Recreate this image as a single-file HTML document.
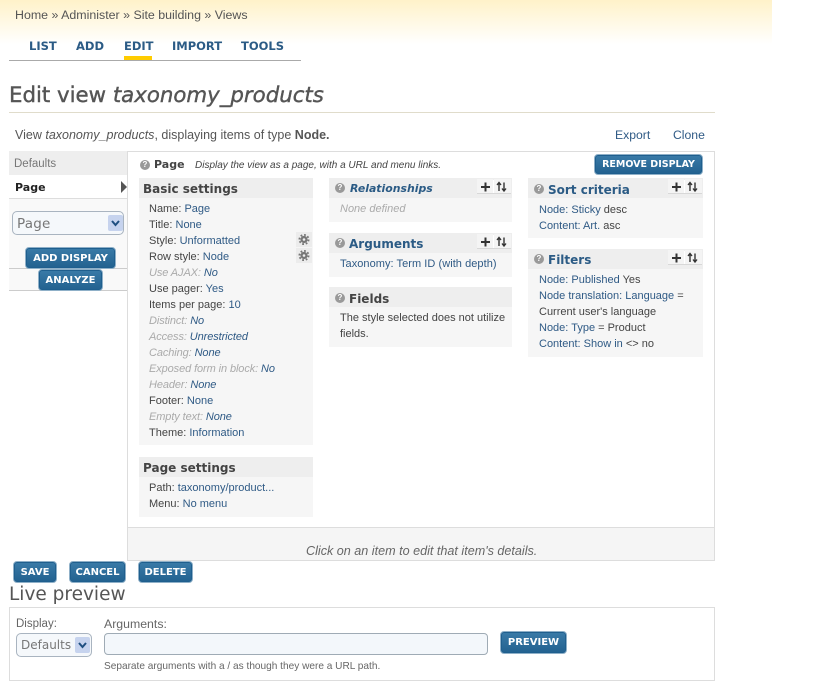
<!DOCTYPE html>
<html><head><meta charset="utf-8"><style>
html,body{margin:0;padding:0;background:#fff;width:840px;height:690px;overflow:hidden}
body{font-family:"Liberation Sans",sans-serif;font-size:11px;color:#444;position:relative}
.a{position:absolute}
.t{position:absolute;white-space:nowrap;line-height:16px;height:16px}
.r{margin-top:1px}
i{font-style:italic}
.l{color:#2f5a85}
.d{color:#aaa;font-style:italic;letter-spacing:-.1px}
.d span{color:#2f5a85}
.h{position:absolute;background:#eee;height:20px}
.p{position:absolute;background:#f6f6f6}
.ht{position:absolute;white-space:nowrap;font-family:"DejaVu Sans",sans-serif;font-weight:bold;font-size:12px;line-height:16px;color:#444}
.tab{position:absolute;white-space:nowrap;top:38px;font:bold 11.5px/16px "DejaVu Sans",sans-serif;color:#2b5b85}
.b{position:absolute;box-sizing:border-box;border:1px solid #8fb0c8;border-radius:4px;background:linear-gradient(#3a7ba8,#22618f);box-shadow:inset 0 0 0 1px #1f5f8e;color:#fff;font-family:"DejaVu Sans",sans-serif;font-weight:bold;font-size:10px;text-align:center;white-space:nowrap}
.q{position:absolute;width:10px;height:10px;border-radius:50%;background:#999;color:#fff;font:bold 8px/10px "Liberation Sans",sans-serif;text-align:center}
.ic{position:absolute;width:35px;height:15px}
.g{position:absolute;width:16px;height:15px}
.sel{position:absolute;box-sizing:border-box;border:1px solid #a9b4c0;border-radius:5px;background:#f5f8fb;color:#777;font-family:"DejaVu Sans",sans-serif;white-space:nowrap}
.ar{position:absolute;width:15px;height:16px;background:#c6d3ee;border-radius:2px}
</style></head><body>
<svg width="0" height="0" style="position:absolute"><defs>
<g id="pm">
<rect x="0" y="0" width="16" height="15" fill="#f4f4f4"/><rect x="17" y="0" width="17" height="15" fill="#f4f4f4"/>
<rect x="0" y="14" width="34" height="1" fill="#d8d8d8"/><rect x="16" y="1" width="1" height="13" fill="#fff"/>
<path d="M4 8h9M8.500 3.500v9" stroke="#333" stroke-width="2" fill="none"/>
<path d="M22 12V4M20 6l2-2.500 2 2.500M27 3.500v8M25 9.500l2 2.500 2-2.500" stroke="#333" stroke-width="1.400" fill="none"/>
</g>
<g id="gear">
<rect width="16" height="15" fill="#ececec"/>
<circle cx="8" cy="7.500" r="3.600" fill="#777"/>
<circle cx="8" cy="7.500" r="4.600" fill="none" stroke="#777" stroke-width="1.800" stroke-dasharray="1.800 1.800"/>
<circle cx="8" cy="7.500" r="1.300" fill="#eee"/>
</g>
</defs></svg>
<div class="a" style="left:0;top:0;width:772px;height:44px;background:linear-gradient(#fff2c9,#fff)"></div>
<div class="t" style="left:15px;top:7px;color:#555;font-size:12.4px">Home » Administer » Site building » Views</div>

<div class="tab" style="left:29px">LIST</div>
<div class="tab" style="left:76px">ADD</div>
<div class="tab" style="left:124px">EDIT</div>
<div class="tab" style="left:172px">IMPORT</div>
<div class="tab" style="left:241px">TOOLS</div>
<div class="a" style="left:124px;top:56px;width:28px;height:4px;background:#fc0"></div>
<div class="a" style="left:9px;top:60px;width:292px;height:1px;background:#aaa"></div>

<div class="t" style="left:9px;top:82px;height:28px;font:21.300px/28px 'DejaVu Sans',sans-serif;color:#555;-webkit-text-stroke:.4px #555">Edit view <i>taxonomy_products</i></div>
<div class="a" style="left:9px;top:112px;width:706px;height:1px;background:#e0dccb"></div>

<div class="t" style="left:15px;top:127px;color:#555;font-size:12.500px">View <i>taxonomy_products</i>, displaying items of type <b>Node.</b></div>
<div class="t l" style="left:615px;top:127px;font-size:12.200px">Export</div>
<div class="t l" style="left:673px;top:127px;font-size:12.200px">Clone</div>

<!-- left column -->
<div class="a" style="left:9px;top:151px;width:119px;height:24px;background:#eee"></div>
<div class="t" style="left:14px;top:156px;color:#777;font-size:11.500px">Defaults</div>
<div class="a" style="left:9px;top:198px;width:119px;height:92px;background:#f9f9f9;border-top:1px solid #ddd;box-sizing:border-box"></div>
<div class="a" style="left:9px;top:268px;width:119px;height:1px;background:#ccc"></div>
<div class="a" style="left:9px;top:290px;width:119px;height:1px;background:#ccc"></div>
<div class="t" style="left:15px;top:180px;font:bold 11px/16px 'DejaVu Sans',sans-serif;color:#222">Page</div>
<div class="a" style="left:121px;top:181px;width:0;height:0;border-left:6px solid #555;border-top:6px solid transparent;border-bottom:6px solid transparent"></div>
<div class="sel" style="left:12px;top:211px;width:112px;height:24px;padding:4px 0 0 4px;font-size:13.500px;letter-spacing:.2px">Page</div>
<div class="ar" style="left:108px;top:215px"><svg width="15" height="16"><path d="M4 6l3.500 4L11 6" fill="none" stroke="#1f4f80" stroke-width="2"/></svg></div>
<div class="b" style="left:25px;top:247px;width:91px;height:22px;line-height:21px">ADD DISPLAY</div>
<div class="b" style="left:38px;top:269px;width:65px;height:22px;line-height:21px">ANALYZE</div>

<!-- main box -->
<div class="a" style="left:127px;top:151px;width:588px;height:410px;box-sizing:border-box;border:1px solid #ddd"></div>
<div class="a" style="left:128px;top:527px;width:586px;height:33px;background:#f5f5f5;border-top:1px solid #ddd;box-sizing:border-box"></div>
<div class="t" style="left:306px;top:543px;color:#666;font-style:italic;font-size:12.600px">Click on an item to edit that item's details.</div>

<div class="q" style="left:140px;top:160px">?</div>
<div class="t" style="left:154px;top:157px;font:bold 11px/16px 'DejaVu Sans',sans-serif;color:#444">Page</div>
<div class="t" style="left:195px;top:158px;font-size:10px;font-style:italic;color:#444">Display the view as a page, with a URL and menu links.</div>
<div class="b" style="left:594px;top:154px;width:109px;height:21px;line-height:20px;font-size:9.500px">REMOVE DISPLAY</div>

<!-- basic settings -->
<div class="p" style="left:139px;top:178px;width:174px;height:267px"></div>
<div class="h" style="left:139px;top:178px;width:174px"></div>
<div class="ht" style="left:143px;top:181px">Basic settings</div>
<div class="t r" style="left:149px;top:200px">Name: <span class="l">Page</span></div>
<div class="t r" style="left:149px;top:216px">Title: <span class="l">None</span></div>
<div class="t r" style="left:149px;top:232px">Style: <span class="l">Unformatted</span></div>
<div class="t r" style="left:149px;top:248px">Row style: <span class="l">Node</span></div>
<div class="t d r" style="left:149px;top:264px">Use AJAX: <span>No</span></div>
<div class="t r" style="left:149px;top:280px">Use pager: <span class="l">Yes</span></div>
<div class="t r" style="left:149px;top:296px">Items per page: <span class="l">10</span></div>
<div class="t d r" style="left:149px;top:312px">Distinct: <span>No</span></div>
<div class="t d r" style="left:149px;top:328px">Access: <span>Unrestricted</span></div>
<div class="t d r" style="left:149px;top:344px">Caching: <span>None</span></div>
<div class="t d r" style="left:149px;top:360px">Exposed form in block: <span>No</span></div>
<div class="t d r" style="left:149px;top:376px">Header: <span>None</span></div>
<div class="t r" style="left:149px;top:392px">Footer: <span class="l">None</span></div>
<div class="t d r" style="left:149px;top:408px">Empty text: <span>None</span></div>
<div class="t r" style="left:149px;top:424px">Theme: <span class="l">Information</span></div>
<svg class="g" style="left:296px;top:232px"><use href="#gear"/></svg>
<svg class="g" style="left:296px;top:248px"><use href="#gear"/></svg>

<!-- page settings -->
<div class="p" style="left:139px;top:457px;width:174px;height:60px"></div>
<div class="h" style="left:139px;top:457px;width:174px"></div>
<div class="ht" style="left:143px;top:460px">Page settings</div>
<div class="t r" style="left:149px;top:479px">Path: <span class="l">taxonomy/product...</span></div>
<div class="t r" style="left:149px;top:495px">Menu: <span class="l">No menu</span></div>

<!-- relationships -->
<div class="p" style="left:329px;top:178px;width:183px;height:44px"></div>
<div class="h" style="left:329px;top:178px;width:183px"></div>
<div class="q" style="left:335px;top:183px">?</div>
<div class="ht" style="left:350px;top:181px;color:#2b5b85;font-style:italic;font-size:10.900px">Relationships</div>
<div class="t r" style="left:340px;top:200px;color:#aaa;font-style:italic">None defined</div>
<svg class="ic" style="left:477px;top:179px"><use href="#pm"/></svg>

<!-- arguments -->
<div class="p" style="left:329px;top:233px;width:183px;height:44px"></div>
<div class="h" style="left:329px;top:233px;width:183px"></div>
<div class="q" style="left:335px;top:238px">?</div>
<div class="ht" style="left:349px;top:236px;color:#2b5b85">Arguments</div>
<div class="t l r" style="left:340px;top:255px;letter-spacing:.05px">Taxonomy: Term ID (with depth)</div>
<svg class="ic" style="left:477px;top:234px"><use href="#pm"/></svg>

<!-- fields -->
<div class="p" style="left:329px;top:287px;width:183px;height:60px"></div>
<div class="h" style="left:329px;top:287px;width:183px"></div>
<div class="q" style="left:335px;top:293px">?</div>
<div class="ht" style="left:349px;top:291px">Fields</div>
<div class="t r" style="left:340px;top:309px">The style selected does not utilize</div>
<div class="t r" style="left:340px;top:325px">fields.</div>

<!-- sort -->
<div class="p" style="left:528px;top:178px;width:175px;height:60px"></div>
<div class="h" style="left:528px;top:178px;width:175px"></div>
<div class="q" style="left:534px;top:184px">?</div>
<div class="ht" style="left:548px;top:182px;color:#2b5b85">Sort criteria</div>
<div class="t r" style="left:539px;top:201px"><span class="l">Node: Sticky</span> desc</div>
<div class="t r" style="left:539px;top:217px"><span class="l">Content: Art.</span> asc</div>
<svg class="ic" style="left:668px;top:179px"><use href="#pm"/></svg>

<!-- filters -->
<div class="p" style="left:528px;top:249px;width:175px;height:108px"></div>
<div class="h" style="left:528px;top:249px;width:175px"></div>
<div class="q" style="left:534px;top:254px">?</div>
<div class="ht" style="left:548px;top:252px;color:#2b5b85">Filters</div>
<div class="t r" style="left:539px;top:271px"><span class="l">Node: Published</span> Yes</div>
<div class="t r" style="left:539px;top:287px"><span class="l">Node translation: Language</span> =</div>
<div class="t r" style="left:539px;top:303px">Current user's language</div>
<div class="t r" style="left:539px;top:319px"><span class="l">Node: Type</span> = Product</div>
<div class="t r" style="left:539px;top:335px"><span class="l">Content: Show in</span> &lt;&gt; no</div>
<svg class="ic" style="left:668px;top:250px"><use href="#pm"/></svg>

<!-- bottom buttons -->
<div class="b" style="left:13px;top:561px;width:44px;height:22px;line-height:21px">SAVE</div>
<div class="b" style="left:69px;top:561px;width:57px;height:22px;line-height:21px">CANCEL</div>
<div class="b" style="left:138px;top:561px;width:55px;height:22px;line-height:21px">DELETE</div>

<div class="t" style="left:9px;top:583px;height:24px;font:18.500px/24px 'DejaVu Sans',sans-serif;color:#555">Live preview</div>
<div class="a" style="left:9px;top:607px;width:706px;height:74px;box-sizing:border-box;border:1px solid #ddd"></div>
<div class="t" style="left:16px;top:616px;color:#666;font-size:11.500px">Display:</div>
<div class="t" style="left:104px;top:616px;color:#666;font-size:12.300px">Arguments:</div>
<div class="sel" style="left:16px;top:633px;width:76px;height:24px;padding:4px 0 0 4px;font-size:12px">Defaults</div>
<div class="ar" style="left:75px;top:637px"><svg width="15" height="16"><path d="M4 6l3.500 4L11 6" fill="none" stroke="#1f4f80" stroke-width="2"/></svg></div>
<div class="a" style="left:104px;top:633px;width:384px;height:22px;box-sizing:border-box;border:1px solid #9fabb5;border-radius:4px;background:#f3f7fb"></div>
<div class="b" style="left:500px;top:631px;width:67px;height:23px;line-height:22px">PREVIEW</div>
<div class="t" style="left:104px;top:659px;font-size:10.100px;color:#666">Separate arguments with a / as though they were a URL path.</div>
</body></html>
